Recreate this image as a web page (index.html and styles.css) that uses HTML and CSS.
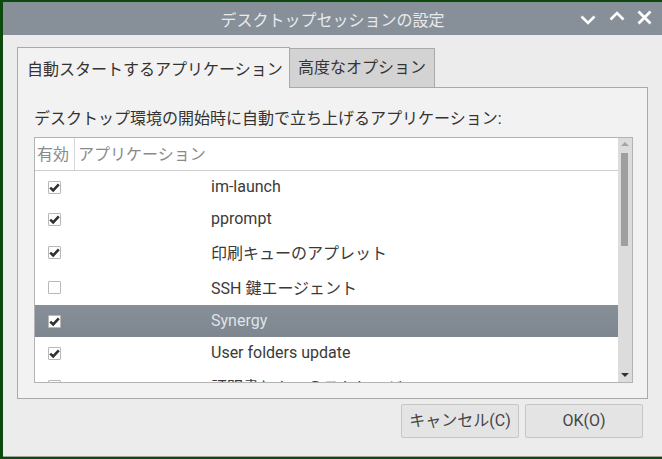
FILE: index.html
```html
<!DOCTYPE html>
<html lang="ja">
<head>
  <meta charset="UTF-8">
  <title>デスクトップセッションの設定</title>
  <link rel="stylesheet" href="styles.css">
</head>
<body>
  <div id="window">
    <div id="titlebar">
      <span class="title">デスクトップセッションの設定</span>
      <div class="controls">
        <svg class="ctl ctl-min" width="16" height="10" viewBox="0 0 16 10"><path d="M1.5 1.5 L8 8 L14.5 1.5" fill="none" stroke="#fff" stroke-width="2.6"/></svg>
        <svg class="ctl ctl-max" width="16" height="10" viewBox="0 0 16 10"><path d="M1.5 8.5 L8 2 L14.5 8.5" fill="none" stroke="#fff" stroke-width="2.6"/></svg>
        <svg class="ctl ctl-close" width="15" height="15" viewBox="0 0 15 15"><path d="M1.5 1.5 L13.5 13.5 M13.5 1.5 L1.5 13.5" fill="none" stroke="#fff" stroke-width="2.8"/></svg>
      </div>
    </div>

    <div id="content">
      <div class="notebook">
        <div class="tabs">
          <div class="tab tab-active">自動スタートするアプリケーション</div>
          <div class="tab">高度なオプション</div>
        </div>
        <div class="page">
          <div class="page-label">デスクトップ環境の開始時に自動で立ち上げるアプリケーション:</div>
          <div class="list">
            <div class="list-main">
              <div class="list-header">
                <div class="col-enabled">有効</div>
                <div class="col-name">アプリケーション</div>
              </div>
              <div class="row">
                <div class="cell-check"><span class="check on"></span></div>
                <div class="cell-name">im-launch</div>
              </div>
              <div class="row">
                <div class="cell-check"><span class="check on"></span></div>
                <div class="cell-name">pprompt</div>
              </div>
              <div class="row tall">
                <div class="cell-check"><span class="check on"></span></div>
                <div class="cell-name">印刷キューのアプレット</div>
              </div>
              <div class="row tall">
                <div class="cell-check"><span class="check"></span></div>
                <div class="cell-name">SSH 鍵エージェント</div>
              </div>
              <div class="row selected">
                <div class="cell-check"><span class="check on"></span></div>
                <div class="cell-name">Synergy</div>
              </div>
              <div class="row">
                <div class="cell-check"><span class="check on"></span></div>
                <div class="cell-name">User folders update</div>
              </div>
              <div class="row tall">
                <div class="cell-check"><span class="check"></span></div>
                <div class="cell-name">証明書とキーのストレージ</div>
              </div>
            </div>
            <div class="scrollbar">
              <span class="arrow-up"></span>
              <div class="thumb"></div>
              <span class="arrow-down"></span>
            </div>
          </div>
        </div>
      </div>

      <div class="buttons">
        <a class="btn">キャンセル(C)</a>
        <a class="btn">OK(O)</a>
      </div>
    </div>
  </div>
</body>
</html>
```

FILE: styles.css
```css
html, body {
  margin: 0;
  padding: 0;
}

body {
  background-color: #0b4a0c;
  font-family: "Roboto", "Noto Sans CJK JP", sans-serif;
  font-size: 16px;
  color: #3a3a3a;
  height: 459px;
  overflow: hidden;
}

#window {
  margin: 2px 0 0 3px;
  height: 454px;
  background-color: #ececec;
  border-bottom: 1px solid #a0a0a0;
  display: flex;
  flex-direction: column;
}

#titlebar {
  height: 33px;
  background-color: #878f99;
  display: flex;
  align-items: center;
  justify-content: center;
  position: relative;
}

#titlebar .title {
  color: #e8ebee;
  font-size: 16px;
}

.controls {
  position: absolute;
  right: 10px;
  top: 0;
  height: 33px;
  display: flex;
  align-items: center;
}

.ctl {
  display: block;
}

.ctl-min {
  margin-top: 3px;
  margin-right: 13px;
}

.ctl-max {
  margin-top: -5px;
  margin-right: 12px;
}

.ctl-close {
  margin-top: -3px;
}

#content {
  padding: 12px 14px 0 14px;
}

.tabs {
  display: flex;
  align-items: flex-end;
  height: 40px;
}

.tab {
  box-sizing: border-box;
  height: 39px;
  line-height: 37px;
  padding: 0 8px;
  background-color: #d3d3d3;
  border: 1px solid #a9a9a9;
  border-bottom: none;
  border-left: none;
  color: #333;
}

.tab-active {
  height: 41px;
  margin-bottom: -1px;
  width: 273px;
  padding: 0 0 0 9px;
  line-height: 44px;
  background-color: #f2f2f2;
  border-left: 1px solid #a9a9a9;
  position: relative;
  z-index: 1;
}

.page {
  border: 1px solid #a9a9a9;
  background-color: #f2f2f2;
  padding: 19px 14px 15px 16px;
}

.page-label {
  line-height: 24px;
  margin-bottom: 6px;
  color: #333;
}

.list {
  display: flex;
  height: 244px;
  border: 1px solid #b3b3b3;
  background-color: #fff;
  overflow: hidden;
}

.list-main {
  flex: 1;
  overflow: hidden;
}

.list-header {
  display: flex;
  height: 32px;
  line-height: 34px;
  border-bottom: 1px solid #cfcfcf;
  color: #8a8a8a;
}

.col-enabled {
  width: 37px;
  padding-left: 2px;
  border-right: 1px solid #d8d8d8;
}

.col-name {
  padding-left: 3px;
}

.row {
  display: flex;
  align-items: center;
  height: 32px;
}

.row.tall {
  height: 35px;
}

.row.selected {
  background: linear-gradient(#878f99, #7e8690);
  color: #dfe3e8;
}

.cell-check {
  width: 163px;
  padding-left: 13px;
  display: flex;
  align-items: center;
}

.cell-name {
  white-space: nowrap;
  margin-top: -1px;
}

.check {
  display: block;
  box-sizing: border-box;
  width: 13px;
  height: 13px;
  border: 1px solid #b8b8b8;
  background-color: #fff;
  border-radius: 1px;
}

.check.on {
  background: #fff url("data:image/svg+xml;utf8,<svg xmlns='http://www.w3.org/2000/svg' width='11' height='11' viewBox='0 0 11 11'><path d='M1.2 5.6 L4.2 8.4 L9.8 2.4' fill='none' stroke='%23303030' stroke-width='2.6'/></svg>") no-repeat center;
}

.scrollbar {
  width: 14px;
  background-color: #dcdcdc;
  position: relative;
}

.arrow-up {
  position: absolute;
  left: 3px;
  top: 4px;
  border-left: 4px solid transparent;
  border-right: 4px solid transparent;
  border-bottom: 4px solid #a4a4a4;
}

.arrow-down {
  position: absolute;
  left: 3px;
  bottom: 5px;
  border-left: 4px solid transparent;
  border-right: 4px solid transparent;
  border-top: 4px solid #333;
}

.thumb {
  position: absolute;
  left: 3px;
  top: 15px;
  width: 7px;
  height: 93px;
  background-color: #9f9f9f;
}

.buttons {
  display: flex;
  justify-content: flex-end;
  gap: 6px;
  margin-top: 5px;
  padding-right: 5px;
}

.btn {
  box-sizing: border-box;
  width: 118px;
  height: 34px;
  line-height: 32px;
  text-align: center;
  background-color: #e4e4e4;
  border: 1px solid #c6c6c6;
  border-radius: 2px;
  color: #444;
  cursor: pointer;
}
```
